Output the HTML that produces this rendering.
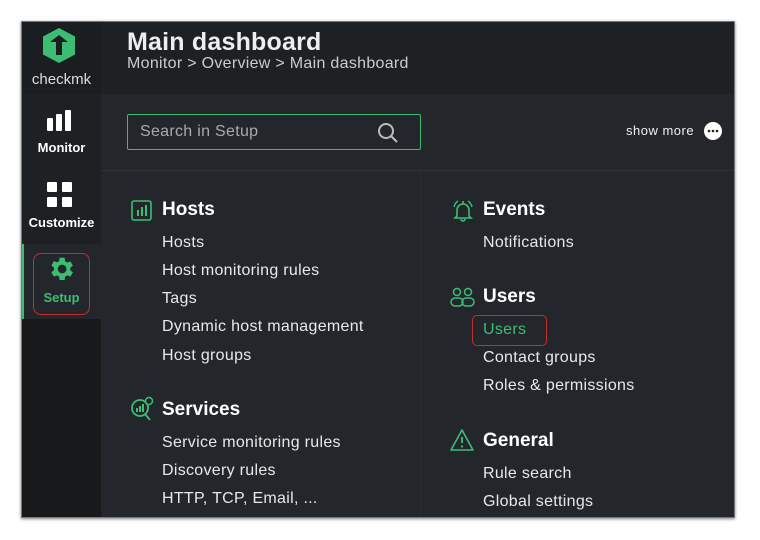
<!DOCTYPE html>
<html><head><style>
*{margin:0;padding:0;box-sizing:border-box}
body{width:760px;height:540px;background:#fff;font-family:"Liberation Sans",Arial,sans-serif;position:relative;overflow:hidden}
.frame{position:absolute;left:21px;top:21px;width:714px;height:497px;background:#23272c;box-shadow:0 1px 3px rgba(0,0,0,.5);overflow:hidden;border:1px solid #777}
.side{position:absolute;left:0;top:0;width:79px;height:497px;background:#17191b}
.abs{position:absolute}
.t{position:absolute;color:#e8e8e8;font-size:16px;white-space:nowrap;letter-spacing:.3px}
.h{position:absolute;color:#fff;font-size:19px;font-weight:bold;white-space:nowrap}
</style></head><body>
<div class="frame">
 <div class="side">
  <div class="abs" style="left:0;top:0;width:79px;height:72px;background:#1b1e21"></div>
  <svg class="abs" style="left:19px;top:5px" width="36" height="37" viewBox="0 0 36 37"><polygon points="18,1 34,9.5 34,27.5 18,36 2,27.5 2,9.5" fill="#3dbd74"/><path d="M9 15 L18 8 L27 15 L21 15 L21 28 L15 28 L15 15 Z" fill="#1b1e21"/></svg>
  <div class="abs" style="left:0;top:49px;width:79px;text-align:center;color:#ddd;font-size:15px">checkmk</div>
  <div class="abs" style="left:0;top:72px;width:79px;height:150px;background:#1e2124"></div>
  <svg class="abs" style="left:25px;top:88px" width="25" height="22"><rect x="0" y="8" width="6" height="13" fill="#fff" rx="1"/><rect x="9" y="4" width="6" height="17" fill="#fff" rx="1"/><rect x="18" y="0" width="6" height="21" fill="#fff" rx="1"/></svg>
  <div class="abs" style="left:0;top:118px;width:79px;text-align:center;color:#fff;font-size:13px;font-weight:bold">Monitor</div>
  <svg class="abs" style="left:25px;top:160px" width="26" height="26"><rect x="0" y="0" width="10" height="10" fill="#fff" rx="1"/><rect x="15" y="0" width="10" height="10" fill="#fff" rx="1"/><rect x="0" y="15" width="10" height="10" fill="#fff" rx="1"/><rect x="15" y="15" width="10" height="10" fill="#fff" rx="1"/></svg>
  <div class="abs" style="left:0;top:193px;width:79px;text-align:center;color:#fff;font-size:13px;font-weight:bold">Customize</div>
  <div class="abs" style="left:0;top:222px;width:79px;height:75px;background:#23272c;border-left:2px solid #3dbd74"></div>
  <div class="abs" style="left:11px;top:231px;width:57px;height:62px;border:1.5px solid #c0302c;border-radius:8px"></div>
  <svg class="abs" style="left:24px;top:232px" width="30" height="30" viewBox="0 0 24 24"><path fill="#3dbd74" d="M19.4 13a7.5 7.5 0 0 0 0-2l2.1-1.6-2-3.5-2.5 1a7.6 7.6 0 0 0-1.7-1L14.9 3h-4l-.4 2.7a7.6 7.6 0 0 0-1.7 1l-2.5-1-2 3.5L6.4 11a7.5 7.5 0 0 0 0 2l-2.1 1.6 2 3.5 2.5-1a7.6 7.6 0 0 0 1.7 1l.4 2.7h4l.4-2.7a7.6 7.6 0 0 0 1.7-1l2.5 1 2-3.5zM12.9 15.5a3.5 3.5 0 1 1 0-7 3.5 3.5 0 0 1 0 7z"/></svg>
  <div class="abs" style="left:0;top:268px;width:79px;text-align:center;color:#3dbd74;font-size:13px;font-weight:bold">Setup</div>
 </div>
 <div class="abs" style="left:79px;top:0;width:635px;height:72px;background:#1e2124"></div>
 <div class="abs" style="left:105px;top:6px;color:#eee;font-size:25px;font-weight:bold;letter-spacing:.2px">Main dashboard</div>
 <div class="abs" style="left:105px;top:33px;color:#ccc;font-size:16px;letter-spacing:.3px">Monitor &gt; Overview &gt; Main dashboard</div>
 <div class="abs" style="left:79px;top:148px;width:635px;height:1px;background:#2e3237"></div>
 <div class="abs" style="left:398px;top:149px;width:1px;height:348px;background:#2a2e33"></div>
 <div class="abs" style="left:105px;top:92px;width:294px;height:36px;border:1.5px solid #3dbd74;border-radius:2px"></div>
 <div class="abs" style="left:118px;top:101px;color:#aaa;font-size:16px;letter-spacing:.3px">Search in Setup</div>
 <svg class="abs" style="left:355px;top:100px" width="22" height="22"><circle cx="9" cy="9" r="7" stroke="#bbb" stroke-width="2" fill="none"/><line x1="14" y1="14" x2="20" y2="20" stroke="#bbb" stroke-width="2"/></svg>
 <div class="abs" style="left:604px;top:101px;color:#eee;font-size:13px;letter-spacing:.5px">show more</div>
 <svg class="abs" style="left:681px;top:99px" width="20" height="20"><circle cx="10" cy="10" r="9" fill="#fff"/><circle cx="6" cy="10" r="1.3" fill="#222"/><circle cx="10" cy="10" r="1.3" fill="#222"/><circle cx="14" cy="10" r="1.3" fill="#222"/></svg>

 <svg class="abs" style="left:109px;top:178px" width="22" height="22"><rect x="1" y="1" width="19" height="19" rx="2" stroke="#3dbd74" stroke-width="1.6" fill="none"/><rect x="6" y="10" width="2" height="6" fill="#3dbd74"/><rect x="10" y="7" width="2" height="9" fill="#3dbd74"/><rect x="14" y="5" width="2" height="11" fill="#3dbd74"/></svg>
 <div class="h" style="left:140px;top:177px">Hosts</div>
 <div class="t" style="left:140px;top:212px">Hosts</div>
 <div class="t" style="left:140px;top:240px">Host monitoring rules</div>
 <div class="t" style="left:140px;top:268px">Tags</div>
 <div class="t" style="left:140px;top:296px">Dynamic host management</div>
 <div class="t" style="left:140px;top:325px">Host groups</div>
 <svg class="abs" style="left:107px;top:374px" width="26" height="26"><circle cx="11" cy="12" r="8" stroke="#3dbd74" stroke-width="1.8" fill="none"/><line x1="16" y1="18" x2="21" y2="24" stroke="#3dbd74" stroke-width="1.8"/><rect x="7" y="12" width="2" height="4" fill="#3dbd74"/><rect x="10" y="10" width="2" height="6" fill="#3dbd74"/><rect x="13" y="8" width="2" height="8" fill="#3dbd74"/><circle cx="20" cy="5" r="3.5" fill="#23272c" stroke="#3dbd74" stroke-width="1.5"/></svg>
 <div class="h" style="left:140px;top:377px">Services</div>
 <div class="t" style="left:140px;top:412px">Service monitoring rules</div>
 <div class="t" style="left:140px;top:440px">Discovery rules</div>
 <div class="t" style="left:140px;top:468px">HTTP, TCP, Email, ...</div>

 <svg class="abs" style="left:428px;top:176px" width="26" height="26"><path d="M7 18 V12 a6 6 0 0 1 12 0 V18 L21 20 H5 Z" stroke="#3dbd74" stroke-width="1.6" fill="none"/><path d="M11 21 a2 2 0 0 0 4 0" stroke="#3dbd74" stroke-width="1.6" fill="none"/><path d="M4 9 q1-4 4-6 M22 9 q-1-4-4-6" stroke="#3dbd74" stroke-width="1.4" fill="none"/><line x1="13" y1="3" x2="13" y2="6" stroke="#3dbd74" stroke-width="1.6"/></svg>
 <div class="h" style="left:461px;top:177px">Events</div>
 <div class="t" style="left:461px;top:212px">Notifications</div>
 <svg class="abs" style="left:428px;top:265px" width="26" height="22"><circle cx="7" cy="5" r="3.5" stroke="#3dbd74" stroke-width="1.5" fill="none"/><circle cx="18" cy="5" r="3.5" stroke="#3dbd74" stroke-width="1.5" fill="none"/><rect x="1" y="11" width="12" height="8" rx="4" stroke="#3dbd74" stroke-width="1.5" fill="none"/><rect x="12" y="11" width="12" height="8" rx="4" stroke="#3dbd74" stroke-width="1.5" fill="none"/></svg>
 <div class="h" style="left:461px;top:264px">Users</div>
 <div class="abs" style="left:450px;top:293px;width:75px;height:31px;border:1.5px solid #c0302c;border-radius:5px"></div>
 <div class="t" style="left:461px;top:299px;color:#3dbd74">Users</div>
 <div class="t" style="left:461px;top:327px">Contact groups</div>
 <div class="t" style="left:461px;top:355px">Roles &amp; permissions</div>
 <svg class="abs" style="left:427px;top:406px" width="26" height="24"><path d="M13 2 L24 22 H2 Z" stroke="#3dbd74" stroke-width="1.6" fill="none" stroke-linejoin="round"/><line x1="13" y1="9" x2="13" y2="15" stroke="#3dbd74" stroke-width="1.8"/><circle cx="13" cy="18.5" r="1.1" fill="#3dbd74"/></svg>
 <div class="h" style="left:461px;top:408px">General</div>
 <div class="t" style="left:461px;top:443px">Rule search</div>
 <div class="t" style="left:461px;top:471px">Global settings</div>
</div>
</body></html>
